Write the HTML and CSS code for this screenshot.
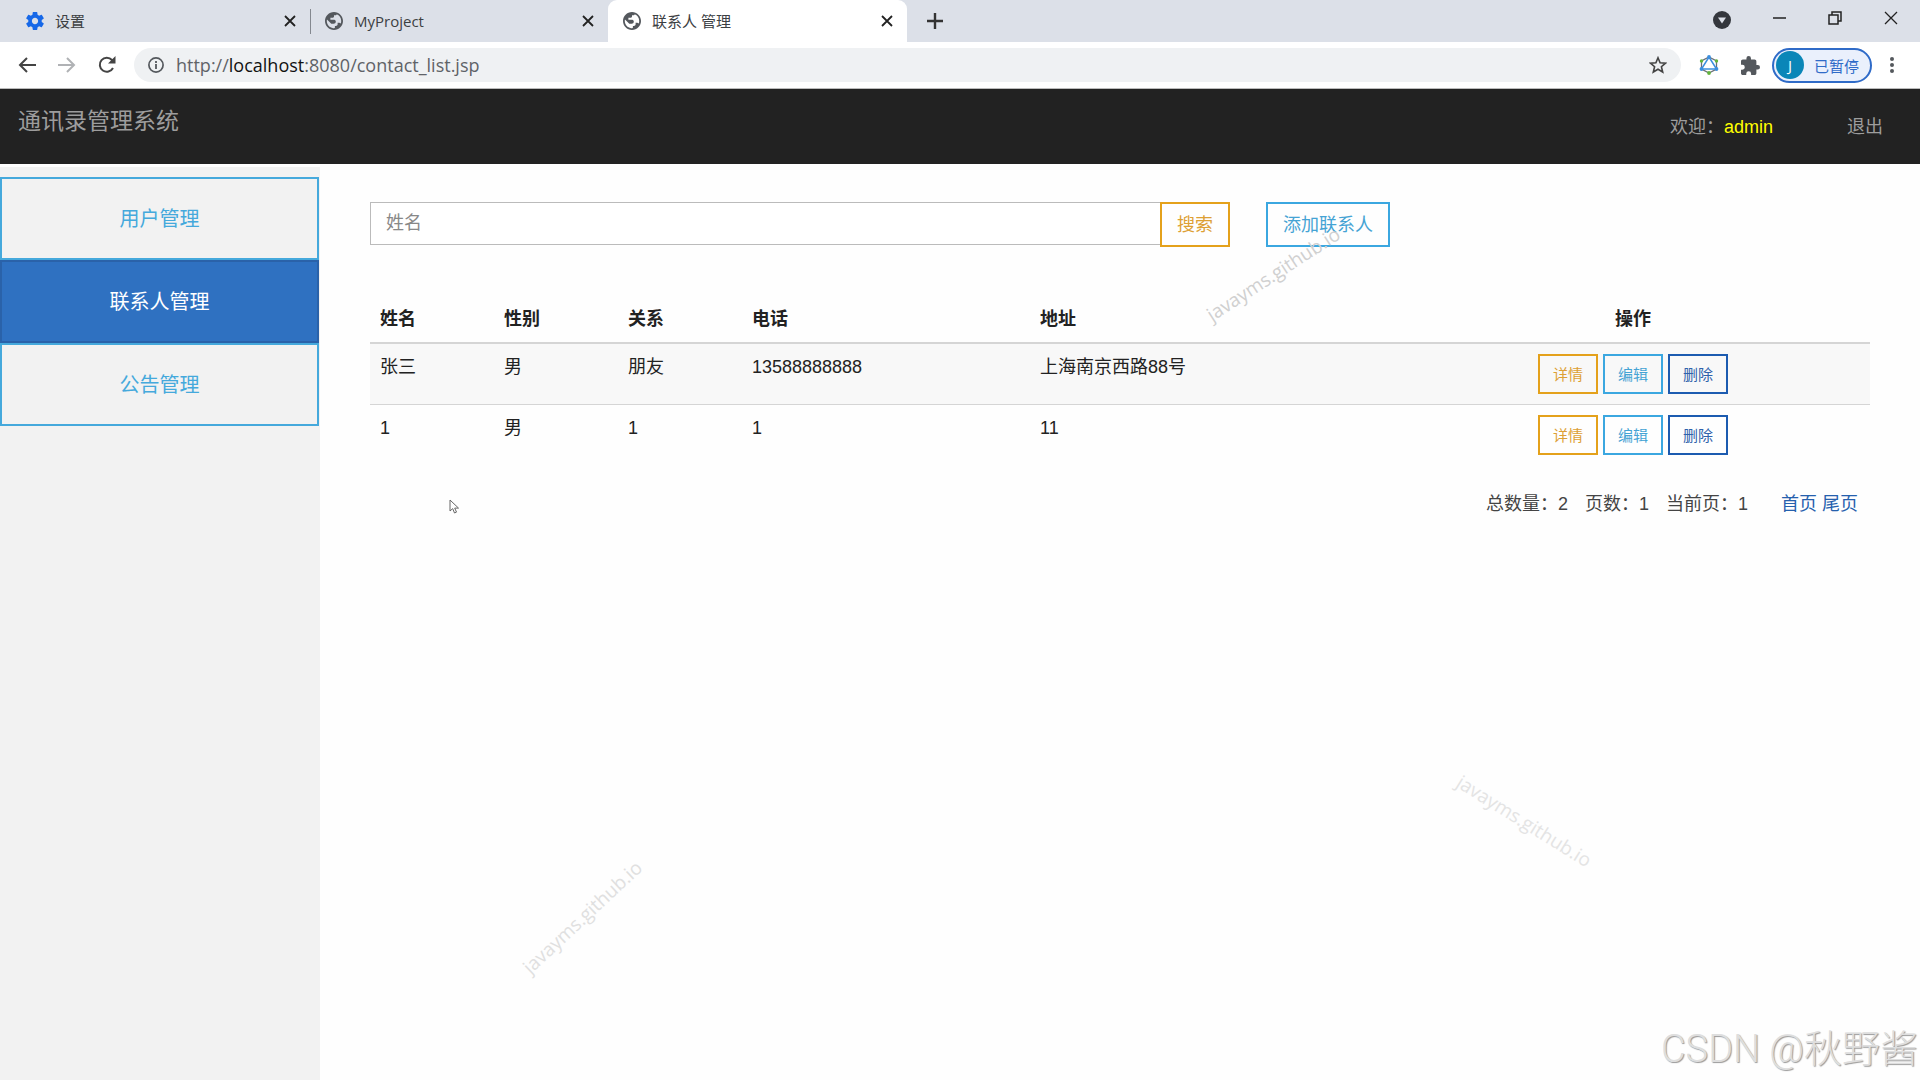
FILE: index.html
```html
<!DOCTYPE html>
<html lang="zh-CN">
<head>
    <meta charset="UTF-8">
    <meta name="viewport" content="width=device-width, initial-scale=1.0">
    <title>联系人 管理</title>
    <link rel="stylesheet" href="styles.css">
</head>
<body>
    <svg class="symbols" width="0" height="0">
        <symbol id="close" viewBox="0 0 12 12"><path d="M1 1l10 10M11 1L1 11" fill="none" stroke="#222" stroke-width="1.8"/></symbol>
        <symbol id="globe" viewBox="2 2 20 20"><path fill="#54585d" d="M12 2C6.48 2 2 6.48 2 12s4.48 10 10 10 10-4.48 10-10S17.52 2 12 2zm-1 17.93c-3.95-.49-7-3.85-7-7.93 0-.62.08-1.21.21-1.79L9 15h2.500c1.500 0 2.500-1 2.500-2.500S13 10.500 11.500 10.500H8V8.500h2c1 0 2-.5 2-1.500V5.500h2c1 0 1-.5 1-.93 2.930 1.190 5 4.060 5 7.430 0 1-.2 2-.5 2.900L18 14h-2v2c0 1-1 1.500-2 1.500h-1v2c0 .4-1 .5-2 .43z"/></symbol>
    </svg>

    <!-- 浏览器 -->
    <div class="tabs">
        <div class="tab">
            <svg class="tab-icon" viewBox="2 2 20 20"><path fill="#1668e8" d="M19.430 12.980c.04-.32.07-.64.07-.98s-.03-.66-.07-.98l2.110-1.650c.19-.15.24-.42.12-.64l-2-3.460c-.12-.22-.39-.3-.61-.22l-2.490 1c-.52-.4-1.080-.73-1.690-.98l-.38-2.650C14.460 2.180 14.250 2 14 2h-4c-.25 0-.46.18-.49.42l-.38 2.650c-.61.25-1.170.59-1.690.98l-2.490-1c-.23-.09-.49 0-.61.22l-2 3.460c-.13.22-.07.49.12.64l2.110 1.650c-.04.32-.07.65-.07.98s.03.66.07.98l-2.110 1.650c-.19.15-.24.42-.12.64l2 3.460c.12.22.39.3.61.22l2.490-1c.52.4 1.080.73 1.690.98l.38 2.650c.03.24.24.42.49.42h4c.25 0 .46-.18.49-.42l.38-2.650c.61-.25 1.170-.59 1.690-.98l2.490 1c.23.09.49 0 .61-.22l2-3.460c.12-.22.07-.49-.12-.64l-2.110-1.650zM12 15.500c-1.930 0-3.500-1.570-3.500-3.500s1.570-3.500 3.500-3.500 3.500 1.570 3.500 3.500-1.570 3.500-3.500 3.500z"/></svg>
            <span class="tab-title">设置</span>
            <button class="icon-btn" aria-label="关闭"><svg width="12" height="12"><use href="#close"/></svg></button>
        </div>
        <div class="tab tab-line">
            <svg class="tab-icon"><use href="#globe"/></svg>
            <span class="tab-title">MyProject</span>
            <button class="icon-btn" aria-label="关闭"><svg width="12" height="12"><use href="#close"/></svg></button>
        </div>
        <div class="tab tab-active">
            <svg class="tab-icon"><use href="#globe"/></svg>
            <span class="tab-title">联系人 管理</span>
            <button class="icon-btn" aria-label="关闭"><svg width="12" height="12"><use href="#close"/></svg></button>
        </div>
        <button class="icon-btn new-tab" aria-label="新标签页"><svg width="16" height="16" viewBox="0 0 16 16"><path d="M8 0v16M0 8h16" stroke="#333" stroke-width="2.400"/></svg></button>
        <div class="window-btns">
            <button class="icon-btn" aria-label="搜索标签页"><svg width="18" height="22" viewBox="0 -4 18 22"><circle cx="9" cy="9" r="9" fill="#34373d"/><path d="M5 6.500h8L9 12.500z" fill="#dce0e8"/></svg></button>
            <button class="icon-btn" aria-label="最小化"><svg width="13" height="14" viewBox="0 0 13 14"><path d="M0 7h13" stroke="#222" stroke-width="1.500"/></svg></button>
            <button class="icon-btn" aria-label="还原"><svg width="14" height="14" viewBox="0 0 14 14"><path d="M1 4h9v9H1zM4 4V1h9v9h-3" fill="none" stroke="#222" stroke-width="1.500"/></svg></button>
            <button class="icon-btn" aria-label="关闭窗口"><svg width="14" height="14" viewBox="0 0 14 14"><path d="M1 1l12 12M13 1L1 13" stroke="#222" stroke-width="1.300"/></svg></button>
        </div>
    </div>
    <div class="toolbar">
        <div class="toolbar-group">
            <button class="icon-btn" aria-label="后退"><svg width="18" height="16" viewBox="0 0 18 16"><path d="M18 8H2M9 1L2 8l7 7" fill="none" stroke="#444" stroke-width="2"/></svg></button>
            <button class="icon-btn" aria-label="前进"><svg width="18" height="16" viewBox="0 0 18 16"><path d="M0 8h16M9 1l7 7-7 7" fill="none" stroke="#b0b2b5" stroke-width="2"/></svg></button>
            <button class="icon-btn" aria-label="刷新"><svg width="18" height="18" viewBox="0 0 18 18"><path d="M15 12a7 7 0 1 1-1-8l2 2" fill="none" stroke="#444" stroke-width="2"/><path d="M17.500 0v7.500H10z" fill="#444"/></svg></button>
        </div>
        <div class="address">
            <svg width="16" height="16" viewBox="0 0 16 16"><circle cx="8" cy="8" r="7.100" fill="none" stroke="#54585d" stroke-width="1.700"/><path d="M8 7v5M8 4v2" stroke="#54585d" stroke-width="1.800"/></svg>
            <div class="url" role="textbox" aria-label="地址">http://<b>localhost</b>:8080/contact_list.jsp</div>
            <button class="icon-btn" aria-label="收藏"><svg width="18" height="18" viewBox="0 0 18 18"><path d="M9 1.800l2.100 5 5.400.4-4.100 3.500 1.300 5.300L9 13.200 4.300 16l1.300-5.300L1.500 7.200l5.400-.4z" fill="none" stroke="#444" stroke-width="1.600"/></svg></button>
        </div>
        <div class="toolbar-group">
            <button class="icon-btn" aria-label="扩展"><svg width="20" height="20" viewBox="0 0 20 20"><path d="M10 2l7.500 4v8L10 18l-7.500-4V6z" fill="none" stroke="#6b7078" stroke-width="1.300"/><path d="M10 2l7.500 12h-15z" fill="none" stroke="#3b8ede" stroke-width="1.500"/><g fill="#3b8ede"><circle cx="10" cy="2" r="1.900"/><circle cx="2.500" cy="14" r="1.900"/><circle cx="17.500" cy="14" r="1.900"/></g><g fill="#62b43c"><circle cx="2.500" cy="6" r="1.700"/><circle cx="17.500" cy="6" r="1.700"/><circle cx="10" cy="18" r="1.900"/></g></svg></button>
            <button class="icon-btn" aria-label="扩展程序"><svg width="19" height="19" viewBox="2 1 21 21"><path fill="#54585d" d="M20.500 11H19V7c0-1.100-.9-2-2-2h-4V3.500a2.500 2.500 0 0 0-5 0V5H4c-1.100 0-2 .9-2 2v3.800h1.500a2.700 2.700 0 0 1 0 5.400H2V20c0 1.100.9 2 2 2h3.800v-1.500a2.700 2.700 0 0 1 5.400 0V22H17c1.100 0 2-.9 2-2v-4h1.500a2.500 2.500 0 0 0 0-5z"/></svg></button>
        </div>
        <button class="profile"><span class="avatar">J</span>已暂停</button>
        <button class="icon-btn menu-btn" aria-label="菜单"><svg width="4" height="16" viewBox="0 0 4 16"><g fill="#54585d"><circle cx="2" cy="2" r="2"/><circle cx="2" cy="8" r="2"/><circle cx="2" cy="14" r="2"/></g></svg></button>
    </div>

    <!-- 顶部导航 -->
    <nav class="navbar">
        <a class="brand" href="#">通讯录管理系统</a>
        <div class="nav-right">
            <span>欢迎：<span class="user">admin</span></span>
            <a href="#">退出</a>
        </div>
    </nav>

    <div class="container">
        <aside class="sidebar">
            <a class="menu-item" href="#">用户管理</a>
            <a class="menu-item active" href="#">联系人管理</a>
            <a class="menu-item" href="#">公告管理</a>
        </aside>

        <main class="main">
            <form class="search">
                <input type="text" class="search-input" placeholder="姓名" aria-label="姓名">
                <button type="button" class="btn btn-warning">搜索</button>
                <button type="button" class="btn btn-info btn-add">添加联系人</button>
            </form>

            <table class="table">
                <colgroup>
                    <col class="col-small"><col class="col-small"><col class="col-small">
                    <col class="col-phone"><col class="col-address"><col>
                </colgroup>
                <thead>
                    <tr>
                        <th>姓名</th>
                        <th>性别</th>
                        <th>关系</th>
                        <th>电话</th>
                        <th>地址</th>
                        <th class="actions">操作</th>
                    </tr>
                </thead>
                <tbody>
                    <tr>
                        <td>张三</td>
                        <td>男</td>
                        <td>朋友</td>
                        <td>13588888888</td>
                        <td>上海南京西路88号</td>
                        <td>
                            <div class="btn-group">
                                <button class="btn btn-sm btn-warning">详情</button>
                                <button class="btn btn-sm btn-info">编辑</button>
                                <button class="btn btn-sm btn-primary">删除</button>
                            </div>
                        </td>
                    </tr>
                    <tr>
                        <td>1</td>
                        <td>男</td>
                        <td>1</td>
                        <td>1</td>
                        <td>11</td>
                        <td>
                            <div class="btn-group">
                                <button class="btn btn-sm btn-warning">详情</button>
                                <button class="btn btn-sm btn-info">编辑</button>
                                <button class="btn btn-sm btn-primary">删除</button>
                            </div>
                        </td>
                    </tr>
                </tbody>
            </table>

            <div class="pager">
                <span>总数量：2</span>
                <span>页数：1</span>
                <span>当前页：1</span>
                <div class="pager-links"><a href="#">首页</a> <a href="#">尾页</a></div>
            </div>
        </main>
    </div>

    <!-- 水印 -->
    <div class="mark mark-1">javayms.github.io</div>
    <div class="mark mark-2">javayms.github.io</div>
    <div class="mark mark-3">javayms.github.io</div>
    <div class="sign">CSDN @秋野酱</div>
    <svg class="cursor" width="11" height="15" viewBox="0 0 11 15"><path d="M1 1v11l2.700-2.400L5.500 14l2-.9-1.800-4H9.500z" fill="#fff" stroke="#666" stroke-width="1"/></svg>
</body>
</html>
```
FILE: styles.css
```css
* {
    box-sizing: border-box;
}

body {
    display: flex;
    flex-direction: column;
    position: relative;
    min-height: 100vh;
    margin: 0;
    overflow: hidden;
    background-color: #fefefe;
    color: #222;
    font-family: "Liberation Sans", "Noto Sans CJK SC", sans-serif;
    font-size: 18px;
    line-height: 26px;
}

a {
    color: inherit;
    text-decoration: none;
}

button {
    margin: 0;
    font-family: inherit;
    cursor: pointer;
}

.symbols {
    position: absolute;
}

.icon-btn {
    display: flex;
    padding: 0;
    border: 0;
    background: none;
}

/* 标签栏 */
.tabs {
    display: flex;
    height: 42px;
    background-color: #dce0e8;
    font-family: "Open Sans", "Noto Sans CJK SC", sans-serif;
    font-size: 15px;
}

.tab {
    display: flex;
    align-items: center;
    gap: 11px;
    width: 299px;
    padding: 0 14px 0 15px;
    color: #3c4043;
}

.tab:first-child {
    width: 310px;
    padding-left: 26px;
}

.tab-line {
    width: 298px;
    background: linear-gradient(#84888f, #84888f) 0 9px / 1px 25px no-repeat;
}

.tab-active {
    border-radius: 9px 9px 0 0;
    background-color: #fff;
}

.tab-icon {
    width: 18px;
    height: 18px;
}

.tab-title {
    flex: 1;
}

.new-tab {
    align-items: center;
    margin-left: 20px;
}

.window-btns {
    display: flex;
    gap: 42px;
    align-items: center;
    height: 36px;
    margin-left: auto;
    padding-right: 22px;
}

/* 地址栏 */
.toolbar {
    display: flex;
    align-items: center;
    gap: 18px;
    height: 47px;
    padding: 0 26px 0 18px;
    border-bottom: 1px solid #bbb;
    background-color: #fff;
    font-family: "Open Sans", "Noto Sans CJK SC", sans-serif;
}

.toolbar-group {
    display: flex;
    gap: 22px;
    align-items: center;
}

.toolbar-group + .profile {
    margin-left: -6px;
}

.address {
    display: flex;
    flex: 1;
    align-items: center;
    gap: 12px;
    height: 34px;
    padding: 0 14px;
    border-radius: 17px;
    background-color: #eff1f3;
}

.url {
    flex: 1;
    color: #5f6368;
    font-size: 18px;
}

.url b {
    color: #111;
    font-weight: normal;
}

.profile {
    display: flex;
    align-items: center;
    gap: 10px;
    height: 35px;
    padding: 0 11px 0 2px;
    border: 2px solid #2f6bc8;
    border-radius: 18px;
    background-color: #eaf0fc;
    color: #2f6bc8;
    font-size: 15px;
}

.avatar {
    width: 28px;
    border-radius: 50%;
    background-color: #0a86b8;
    color: #fff;
    line-height: 28px;
}

/* 导航 */
.navbar {
    display: flex;
    justify-content: space-between;
    height: 75px;
    padding: 0 37px 0 18px;
    background-color: #222;
    color: #9d9d9d;
}

.brand {
    padding-top: 19px;
    font-size: 23px;
}

.nav-right {
    display: flex;
    gap: 74px;
    padding-top: 25px;
}

.user {
    color: #ff0;
}

.container {
    display: flex;
    flex: 1;
    padding-top: 3px;
}

.sidebar {
    width: 320px;
    padding: 10px 1px 0 0;
    background-color: #f2f2f2;
}

.menu-item {
    display: block;
    height: 83px;
    border: 2px solid #45a9dc;
    color: #45a9dc;
    font-size: 20px;
    line-height: 80px;
    text-align: center;
}

.menu-item.active {
    border-color: #2a62a9;
    background-color: #2f71c1;
    color: #fff;
}

/* 内容 */
.main {
    flex: 1;
    padding: 35px 50px 0;
}

.search {
    display: flex;
    margin-bottom: 49px;
}

.search-input {
    width: 790px;
    height: 43px;
    padding: 0 15px;
    border: 1px solid #bbb;
    border-right: 0;
    background-color: #fff;
    font-family: inherit;
    font-size: 18px;
}

.search-input::placeholder {
    color: #888;
}

.btn {
    height: 45px;
    padding: 0 15px 3px;
    border: 2px solid;
    background-color: transparent;
    font-size: 18px;
}

.btn-sm {
    height: 40px;
    padding: 0 13px 2px;
    font-size: 15px;
}

.btn-add {
    margin-left: 36px;
}

.btn-warning {
    border-color: #e4a11b;
    color: #dda034;
}

.btn-info {
    border-color: #3ba7e0;
    color: #45a3d4;
}

.btn-primary {
    border-color: #1c5bb0;
    color: #2f62ab;
}

.table {
    width: 100%;
    border-collapse: collapse;
    table-layout: fixed;
}

.table th,
.table td {
    padding: 10px;
    text-align: left;
    vertical-align: top;
}

.table th {
    border-bottom: 2px solid #d5d5d5;
}

.table .actions {
    text-align: center;
}

.table td {
    border-top: 1px solid #d5d5d5;
}

.table tbody tr:nth-child(odd) {
    background-color: #f8f8f8;
}

.col-small {
    width: 124px;
}

.col-phone {
    width: 288px;
}

.col-address {
    width: 366px;
}

.btn-group {
    display: flex;
    justify-content: center;
    gap: 5px;
}

.pager {
    display: flex;
    justify-content: flex-end;
    gap: 17px;
    padding: 26px 12px;
    color: #444;
}

.pager-links {
    margin-left: 16px;
    color: #2560ad;
}

/* 水印 */
.mark,
.sign,
.cursor {
    position: absolute;
    pointer-events: none;
}

.mark {
    color: #e0e0e0;
    font-family: "Open Sans", sans-serif;
    font-size: 19px;
}

.mark-1 {
    top: 261px;
    left: 1196px;
    color: #d0d0d0;
    transform: rotate(-33deg);
}

.mark-2 {
    top: 904px;
    left: 505px;
    transform: rotate(-43deg);
}

.mark-3 {
    top: 808px;
    left: 1447px;
    color: #e4e4e4;
    transform: rotate(32deg);
}

.sign {
    right: 2px;
    bottom: 9px;
    color: #dedede;
    font-family: Roboto, "Noto Sans CJK SC", sans-serif;
    font-size: 38px;
    font-weight: 300;
    line-height: 44px;
    text-shadow: 1px 1px 1px #999;
}

.cursor {
    top: 499px;
    left: 449px;
}
```
